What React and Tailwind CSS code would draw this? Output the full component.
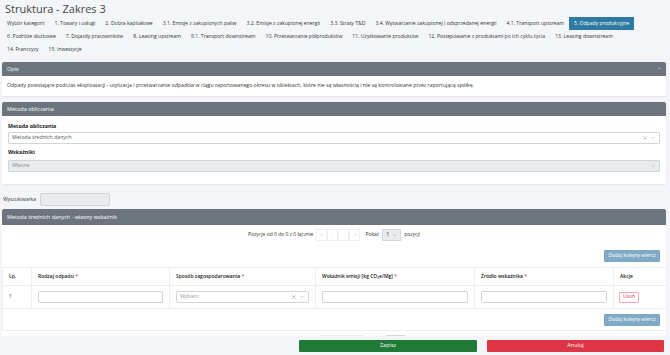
import { X, ChevronDown } from "lucide-react";

const tabs = [
  ["Wybór kategorii", "1. Towary i usługi", "2. Dobra kapitałowe", "3.1. Emisje z zakupionych paliw", "3.2. Emisje z zakupionej energii", "3.3. Straty T&D", "3.4. Wytwarzanie zakupionej i odsprzedanej energii", "4.1. Transport upstream", "5. Odpady produkcyjne"],
  ["6. Podróże służbowe", "7. Dojazdy pracowników", "8. Leasing upstream", "9.1. Transport downstream", "10. Przetwarzanie półproduktów", "11. Użytkowanie produktów", "12. Postępowanie z produktami po ich cyklu życia", "13. Leasing downstream"],
  ["14. Franczyzy", "15. Inwestycje"],
];

function Pager() {
  return (
    <div className="flex items-center justify-center h-[12px] text-[5px] text-[#333]">
      <span>Pozycje od 0 do 0 z 0 łącznie</span>
      <div className="flex ml-[3px]">
        {["«", "‹", "›", "»"].map((c) => (
          <span key={c} className="w-[11px] h-[12px] border border-[#eef0f3] flex items-center justify-center text-[#ccc]">{c}</span>
        ))}
      </div>
      <span className="ml-[5px]">Pokaż</span>
      <div className="ml-[3px] w-[19px] h-[12px] border border-[#d3d6db] bg-[#e9ecef] flex items-center justify-between px-[3px] text-[#666]">
        <span>5</span>
        <ChevronDown size={5} strokeWidth={1.5} />
      </div>
      <span className="ml-[3px]">pozycji</span>
    </div>
  );
}

// bottom pager sits under the footer bar, only its box edges show
function PagerHidden() {
  return (
    <div className="flex items-center h-[12px] pl-[318px]">
      <div className="flex">
        {[0, 1, 2, 3].map((c) => (
          <span key={c} className="w-[11px] h-[12px] border border-[#eef0f3]"></span>
        ))}
      </div>
      <div className="ml-[22px] w-[19px] h-[12px] border border-[#d3d6db] bg-[#e9ecef]"></div>
    </div>
  );
}

function Req({ children }) {
  return (
    <span>
      {children} <span className="text-[#dc3545]">*</span>
    </span>
  );
}

export default function App() {
  const cell = "border-r border-[#eceef1] px-[6px]";
  return (
    <div className="w-[670px] h-[355px] overflow-hidden bg-[#f4f5f9] text-[#333] relative" style={{ fontFamily: "'Open Sans', 'Liberation Sans', sans-serif" }}>
      <div className="px-[2px] pt-[1px]">
        <h1 className="text-[11px] leading-[16px] text-[#444] pl-[3px]">Struktura - Zakres 3</h1>
        <div className="flex flex-col">
          {tabs.map((row, i) => (
            <div key={i} className="flex h-[13px] items-center">
              {row.map((t) => (
                <span key={t} className={`px-[5px] h-[13px] flex items-center text-[5.1px] whitespace-nowrap ${t === "5. Odpady produkcyjne" ? "bg-[#2f7aa3] text-white" : "text-[#333]"}`}>{t}</span>
              ))}
            </div>
          ))}
        </div>

        <div className="mt-[6px] mr-[2px] rounded-[2px] bg-white shadow-[0_1px_2px_rgba(0,0,0,0.08)]">
          <div className="h-[14px] bg-[#6c757d] rounded-t-[2px] flex items-center justify-between px-[5px] text-white text-[5.5px]">
            <span>Opis</span>
            <span className="text-[6px]">−</span>
          </div>
          <div className="h-[20px] flex items-center px-[5px] text-[5.2px] text-[#333]">
            Odpady powstające podczas eksploatacji - utylizacja i przetwarzanie odpadów w ciągu raportowanego okresu w obiektach, które nie są własnością i nie są kontrolowane przez raportującą spółkę.
          </div>
        </div>

        <div className="mt-[6px] mr-[2px] rounded-[2px] bg-white shadow-[0_1px_2px_rgba(0,0,0,0.08)]">
          <div className="h-[14px] bg-[#6c757d] rounded-t-[2px] flex items-center px-[5px] text-white text-[5.5px]">Metoda obliczania</div>
          <div className="px-[6px] pt-[5px] pb-[12px]">
            <div className="text-[5.3px] font-bold text-[#222] h-[11px] flex items-center">Metoda obliczania</div>
            <div className="h-[12px] border border-[#ced4da] rounded-[1px] flex items-center justify-between px-[3px] text-[5.2px] text-[#555]">
              <span>Metoda średnich danych</span>
              <span className="flex items-center gap-[2px] text-[#777]"><X size={6} strokeWidth={1.5} /><ChevronDown size={6} strokeWidth={1.2} /></span>
            </div>
            <div className="text-[5.3px] font-bold text-[#222] h-[15px] flex items-center mt-[1px]">Wskaźniki</div>
            <div className="h-[12px] border border-[#ced4da] bg-[#e9ecef] rounded-[1px] flex items-center justify-between px-[3px] text-[5.2px] text-[#888]">
              <span>Własne</span>
              <ChevronDown size={6} strokeWidth={1.2} className="text-[#777]" />
            </div>
          </div>
        </div>

        <div className="mt-[9px] flex items-center h-[13px] text-[5px] text-[#333]">
          <span className="pl-[1px]">Wyszukiwarka</span>
          <div className="ml-[4px] w-[70px] h-[13px] border border-[#ced4da] rounded-[2px] bg-[#e9ecef]"></div>
        </div>

        <div className="mt-[3px] mr-[2px] bg-white">
          <div className="h-[16px] bg-[#6c757d] rounded-t-[2px] flex items-center px-[5px] text-white text-[5.5px]">Metoda średnich danych - własny wskaźnik</div>
          <div className="pt-[4px]"><Pager /></div>
          <div className="flex justify-end pr-[6px] mt-[9px]">
            <span className="h-[12px] px-[4px] bg-[#7fa9c6] rounded-[1px] text-white text-[5px] flex items-center">Dodaj kolejny wiersz</span>
          </div>
          <div className="mt-[5px] border-t border-l border-[#eceef1] text-[5px]">
            <div className="grid grid-cols-[29px_138px_146px_159px_139px_1fr] h-[18px] border-b border-[#eceef1] font-semibold text-[#222]">
              <div className={`${cell} flex items-center`}>Lp.</div>
              <div className={`${cell} flex items-center`}><Req>Rodzaj odpadu</Req></div>
              <div className={`${cell} flex items-center`}><Req>Sposób zagospodarowania</Req></div>
              <div className={`${cell} flex items-center`}><Req>Wskaźnik emisji [kg CO₂e/Mg]</Req></div>
              <div className={`${cell} flex items-center`}><Req>Źródło wskaźnika</Req></div>
              <div className="px-[6px] flex items-center">Akcje</div>
            </div>
            <div className="grid grid-cols-[29px_138px_146px_159px_139px_1fr] h-[23px] border-b border-[#eceef1]">
              <div className={`${cell} flex items-center`}>1</div>
              <div className={`${cell} flex items-center`}><div className="w-full h-[12px] border border-[#ced4da] rounded-[2px]"></div></div>
              <div className={`${cell} flex items-center`}>
                <div className="w-full h-[12px] border border-[#ced4da] rounded-[2px] flex items-center justify-between px-[3px] text-[#999]">
                  <span>Wybierz</span>
                  <span className="flex items-center gap-[2px] text-[#666]"><X size={6} strokeWidth={1.5} /><ChevronDown size={6} strokeWidth={1.2} /></span>
                </div>
              </div>
              <div className={`${cell} flex items-center`}><div className="w-full h-[12px] border border-[#ced4da] rounded-[2px]"></div></div>
              <div className={`${cell} flex items-center`}><div className="w-full h-[12px] border border-[#ced4da] rounded-[2px]"></div></div>
              <div className="px-[5px] flex items-center">
                <span className="h-[11px] px-[3px] border border-[#f0a6ad] rounded-[1px] text-[#dc3545] flex items-center">Usuń</span>
              </div>
            </div>
            <div className="h-[22px] border-b border-[#eceef1] flex items-center justify-end pr-[6px]">
              <span className="h-[12px] px-[4px] bg-[#7fa9c6] rounded-[1px] text-white text-[5px] flex items-center">Dodaj kolejny wiersz</span>
            </div>
          </div>
          <div className="pt-[4px] pb-[4px]"><PagerHidden /></div>
        </div>
      </div>

      <div className="absolute left-0 right-0 bottom-0 h-[19px] bg-[#f4f5f9] flex items-center justify-end gap-[10px] pr-[6px]">
        <span className="w-[178px] h-[12px] bg-[#1f7a36] rounded-[1px] text-white text-[5.5px] flex items-center justify-center">Zapisz</span>
        <span className="w-[177px] h-[12px] bg-[#dc3545] rounded-[1px] text-white text-[5.5px] flex items-center justify-center">Anuluj</span>
      </div>
    </div>
  );
}
